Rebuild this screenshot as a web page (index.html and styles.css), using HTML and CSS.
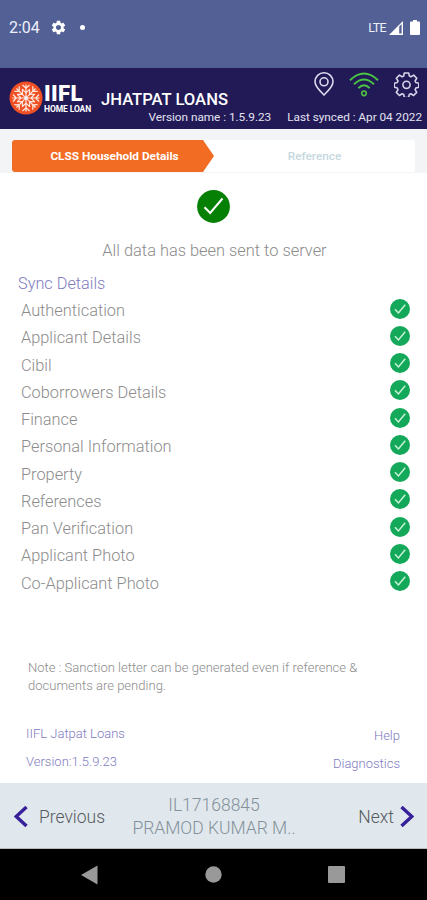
FILE: index.html
```html
<!DOCTYPE html>
<html lang="en">
<head>
<meta charset="utf-8">
<title>Jhatpat Loans</title>
<link rel="stylesheet" href="styles.css">
</head>
<body>
<svg class="defs" width="0" height="0" aria-hidden="true">
  <symbol id="ok" viewBox="0 0 20 20"><circle cx="10" cy="10" r="10" fill="#14a85a"/><path d="M5 10.3 8.4 13.9 15.2 5.8" fill="none" stroke="#c9f3d6" stroke-width="1.5"/></symbol>
  <symbol id="cog" viewBox="0 0 24 24"><path d="M19.14 12.94c.04-.3.06-.61.06-.94 0-.32-.02-.64-.07-.94l2.03-1.58c.18-.14.23-.41.12-.61l-1.92-3.32c-.12-.22-.37-.29-.59-.22l-2.39.96c-.5-.38-1.03-.7-1.62-.94l-.36-2.54c-.04-.24-.24-.41-.48-.41h-3.84c-.24 0-.43.17-.47.41l-.36 2.54c-.59.24-1.13.57-1.62.94l-2.39-.96c-.22-.08-.47 0-.59.22L2.74 8.87c-.12.21-.08.47.12.61l2.03 1.58c-.05.3-.09.63-.09.94s.02.64.07.94l-2.03 1.58c-.18.14-.23.41-.12.61l1.92 3.32c.12.22.37.29.59.22l2.39-.96c.5.38 1.03.7 1.62.94l.36 2.54c.05.24.24.41.48.41h3.84c.24 0 .44-.17.47-.41l.36-2.54c.59-.24 1.13-.56 1.62-.94l2.39.96c.22.08.47 0 .59-.22l1.92-3.32c.12-.22.07-.47-.12-.61l-2.01-1.58zM12 15.6c-1.98 0-3.6-1.62-3.6-3.6s1.62-3.6 3.6-3.6 3.6 1.62 3.6 3.6-1.62 3.6-3.6 3.6z" fill="#fff"/></symbol>
</svg>
<div class="status">
  <span class="time">2:04</span>
  <svg class="status-cog" width="17" height="17"><use href="#cog"/></svg>
  <i class="dot"></i>
  <span class="lte">LTE</span>
  <svg class="signal" width="14" height="14" viewBox="0 0 14 14"><path d="M0 14 14 0V14Z" fill="#fff"/><path d="M10.2 5.6 12.6 3V12.5H10.2Z" fill="#526096"/></svg>
  <svg class="battery" width="10" height="15" viewBox="0 0 10 15"><path d="M3 0H7V1.5H9Q10 1.5 10 2.5V14Q10 15 9 15H1Q0 15 0 14V2.5Q0 1.5 1 1.5H3Z" fill="#fff"/></svg>
</div>
<header class="header">
  <svg class="emblem" width="34" height="34" viewBox="-17 -17 34 34">
    <circle r="16.5" fill="#f05023"/>
    <g fill="none" stroke="#ffe9df" stroke-width="1.2">
      <g id="a"><path d="M0-2V-13.5M-3.5-13 0-9.7 3.5-13M-3.8-8.8 0-5 3.8-8.8"/></g>
      <use href="#a" transform="rotate(45)"/><use href="#a" transform="rotate(90)"/><use href="#a" transform="rotate(135)"/><use href="#a" transform="rotate(180)"/><use href="#a" transform="rotate(225)"/><use href="#a" transform="rotate(270)"/><use href="#a" transform="rotate(315)"/>
    </g>
    <circle r="2" fill="#fff"/>
  </svg>
  <div class="brand"><b>IIFL</b><span>HOME LOAN</span></div>
  <div class="head-main">
    <div class="head-top">
      <h1>JHATPAT LOANS</h1>
      <div class="tools">
        <svg width="20" height="24" viewBox="0 0 20 24" fill="none" stroke="#dcdaf0" stroke-width="1.6"><path d="M10 23Q1 14.5 1 9.8A9 9 0 0 1 19 9.8Q19 14.5 10 23Z"/><circle cx="10" cy="9.8" r="4"/></svg>
        <svg width="30" height="25" viewBox="0 0 30 25" fill="none" stroke="#4cc443" stroke-width="1.9"><path d="M1 8.2Q15-5.2 29 8.2M5 12.3Q15 2.7 25 12.3M9.3 16.2Q15 10.4 20.7 16.2"/><circle cx="15" cy="21.3" r="2.3" stroke-width="1.6"/></svg>
        <svg width="25" height="25" viewBox="0 0 25 25" fill="none" stroke="#d5d3e7" stroke-width="1.6" stroke-linejoin="round"><path d="M10.3 1h4.4l.7 3.1 1.5.7 2.8-1.7 3.1 3.1-1.7 2.8.7 1.5 3 .7v4.1l-3 .8-.7 1.6 1.6 2.7-3.1 3.1-2.7-1.7-1.6.7-.7 3h-4.2l-.7-3-1.6-.7-2.7 1.7-3.1-3.1 1.7-2.7-.7-1.6-3-.8v-4.1l3-.7.7-1.5-1.7-2.8 3.1-3.1 2.8 1.7 1.5-.7Z"/><circle cx="12.5" cy="12.8" r="3.6"/></svg>
      </div>
    </div>
    <div class="head-meta"><span class="ver">Version name : 1.5.9.23</span><span class="synced">Last synced : Apr 04 2022</span></div>
  </div>
</header>
<nav class="tabs">
  <div class="track">
    <div class="tab active"><span>CLSS Household Details</span></div>
    <div class="tab next-tab"><span>Reference</span></div>
  </div>
</nav>
<main class="main">
  <svg class="done" width="33" height="33" viewBox="0 0 33 33"><circle cx="16.5" cy="16.5" r="16.4" fill="#058005"/><path d="M7.5 17.2 13.2 23 25.5 8.5" fill="none" stroke="#fff" stroke-width="2"/></svg>
  <p class="sent"><span>All data has been sent to server</span></p>
  <h2><span>Sync Details</span></h2>
  <ul class="list">
    <li><span>Authentication</span><svg><use href="#ok"/></svg></li>
    <li><span>Applicant Details</span><svg><use href="#ok"/></svg></li>
    <li><span>Cibil</span><svg><use href="#ok"/></svg></li>
    <li><span>Coborrowers Details</span><svg><use href="#ok"/></svg></li>
    <li><span>Finance</span><svg><use href="#ok"/></svg></li>
    <li><span>Personal Information</span><svg><use href="#ok"/></svg></li>
    <li><span>Property</span><svg><use href="#ok"/></svg></li>
    <li><span>References</span><svg><use href="#ok"/></svg></li>
    <li><span>Pan Verification</span><svg><use href="#ok"/></svg></li>
    <li><span>Applicant Photo</span><svg><use href="#ok"/></svg></li>
    <li><span>Co-Applicant Photo</span><svg><use href="#ok"/></svg></li>
  </ul>
  <p class="note">Note : Sanction letter can be generated even if reference &amp;<br>documents are pending.</p>
  <div class="links">
    <div class="links-left"><span>IIFL Jatpat Loans</span><span>Version:1.5.9.23</span></div>
    <div class="links-right"><span>Help</span><span>Diagnostics</span></div>
  </div>
</main>
<footer class="pager">
  <div class="prev"><svg width="14" height="21" viewBox="0 0 14 21"><path d="M12.5 1 2.2 10.5 12.5 20" fill="none" stroke="#38209a" stroke-width="3.4"/></svg><span>Previous</span></div>
  <div class="who"><span class="id">IL17168845</span><span class="name">PRAMOD KUMAR M..</span></div>
  <div class="next"><span>Next</span><svg width="14" height="21" viewBox="0 0 14 21"><path d="M1.5 1 11.8 10.5 1.5 20" fill="none" stroke="#38209a" stroke-width="3.4"/></svg></div>
</footer>
<div class="sysnav">
  <svg width="17" height="20" viewBox="0 0 17 20"><path d="M0 10 16.5 .5V19.5Z" fill="#999"/></svg>
  <svg width="17" height="17" viewBox="0 0 17 17"><circle cx="8.5" cy="8.5" r="8.2" fill="#999"/></svg>
  <svg width="17" height="17" viewBox="0 0 17 17"><rect width="17" height="17" rx="1" fill="#999"/></svg>
</div>
</body>
</html>
```
FILE: styles.css
```css
* { box-sizing: border-box; margin: 0; padding: 0; }
body { width: 427px; height: 900px; overflow: hidden; background: #fff; font-family: Roboto, "Liberation Sans", sans-serif; font-weight: 300; display: flex; flex-direction: column; }
svg { display: block; flex: none; }
span, h1 { white-space: nowrap; }
.defs { position: absolute; }

.status { height: 68px; padding: 0 7px 13px 9px; background: #526096; color: #fff; display: flex; align-items: center; flex: none; }
.time { font-size: 16px; font-weight: 400; width: 41px; color: #eef0fa; }
.dot { width: 5px; height: 5px; border-radius: 50%; background: #fff; margin-left: 13px; }
.lte { margin-left: auto; font-size: 12.5px; font-weight: 400; letter-spacing: -.6px; color: #eef0fa; }
.signal { margin-left: 3px; }
.battery { margin-left: 7px; }

.header { height: 61px; background: #211a57; color: #fff; display: flex; padding-left: 9px; flex: none; }
.emblem { margin-top: 13px; }
.brand { margin: 13px 0 0 1px; width: 57px; display: flex; flex-direction: column; }
.brand b { font-weight: 900; font-size: 22px; line-height: 26px; letter-spacing: .4px; margin-bottom: -2px; }
.brand span { font-weight: 700; font-size: 8.5px; line-height: 9px; letter-spacing: -.1px; }
.head-main { flex: 1; display: flex; flex-direction: column; }
.head-top { height: 41px; display: flex; justify-content: space-between; }
h1 { font-size: 16.6px; font-weight: 500; line-height: 20px; margin-top: 22px; }
.tools { display: flex; gap: 15px; padding: 4px 8px 0 0; }
.head-meta { display: flex; justify-content: flex-end; padding-right: 5px; font-size: 11.8px; font-weight: 400; line-height: 17px; gap: 16px; letter-spacing: -.03px; color: #e4e2f0; }

.tabs { height: 44px; padding: 11px 12px 1px; background: #f3f4f6; flex: none; }
.track { height: 32px; display: flex; background: #fff; border-radius: 3px; }
.tab { flex: 1; display: flex; align-items: center; justify-content: center; font-weight: 700; font-size: 11.8px; }
.active { background: #f36c24; color: #fff; border-radius: 3px 0 0 3px; flex: 0 0 202px; padding-left: 3px; clip-path: polygon(0 0, 191px 0, 100% 50%, 191px 100%, 0 100%); }
.next-tab { color: #c5d8de; font-weight: 500; }

.main { flex: 1; display: flex; flex-direction: column; color: #8c8c8c; }
.done { margin: 17px 0 0 197px; }
.sent { text-align: center; font-size: 16.4px; line-height: 20px; margin-top: 18px; padding-left: 2px; }
h2 { font-size: 16.3px; font-weight: 300; line-height: 20px; color: #807bc0; margin: 13px 0 3px 18px; }
.list { list-style: none; padding: 0 17px 0 21px; }
.list li { height: 27.25px; display: flex; align-items: center; justify-content: space-between; font-size: 16.35px; }
.list svg { width: 20px; height: 20px; margin-top: -4px; }
.note { font-size: 13.05px; line-height: 18px; margin: 62px 0 0 28px; }
.links { display: flex; justify-content: space-between; padding: 31px 27px 0 26px; font-size: 13px; line-height: 16px; color: #807bc0; }
.links-left, .links-right { display: flex; flex-direction: column; gap: 12px; }
.links-right { align-items: flex-end; padding-top: 2px; }

.pager { height: 66px; background: #e1e8ed; display: flex; align-items: center; justify-content: space-between; padding: 2px 13px 0 14px; font-size: 17.5px; color: #555b60; flex: none; border-bottom: 1px solid #b4babd; }
.prev, .next { display: flex; align-items: center; width: 106px; gap: 11px; }
.next { justify-content: flex-end; gap: 6px; }
.who { display: flex; flex-direction: column; align-items: center; line-height: 23px; padding-top: 1px; color: #84919b; }
.sysnav { height: 51px; background: #000; display: flex; align-items: center; justify-content: space-between; padding: 0 82px 0 81px; flex: none; }
```
